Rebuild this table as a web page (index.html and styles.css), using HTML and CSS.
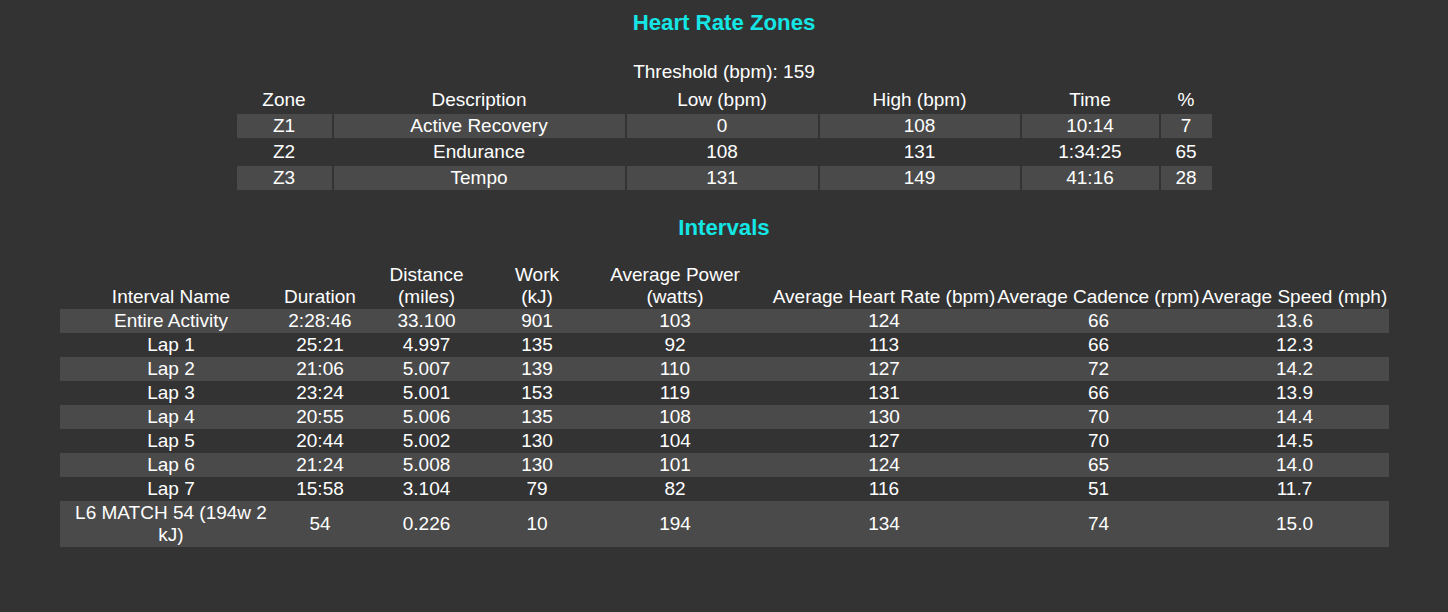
FILE: index.html
```html
<!DOCTYPE html>
<html lang="en">
<head>
<meta charset="utf-8">
<title>Heart Rate Zones and Intervals</title>
<link rel="stylesheet" href="styles.css">
</head>
<body>
<main class="page">
  <h3 class="title">Heart Rate Zones</h3>
  <div class="threshold">Threshold (bpm): 159</div>
  <table class="zones">
    <colgroup>
      <col class="z-zone"><col class="z-desc"><col class="z-low"><col class="z-high"><col class="z-time"><col class="z-pct">
    </colgroup>
    <thead>
      <tr><th>Zone</th><th>Description</th><th>Low (bpm)</th><th>High (bpm)</th><th>Time</th><th>%</th></tr>
    </thead>
    <tbody>
      <tr class="shaded"><td>Z1</td><td>Active Recovery</td><td>0</td><td>108</td><td>10:14</td><td>7</td></tr>
      <tr><td>Z2</td><td>Endurance</td><td>108</td><td>131</td><td>1:34:25</td><td>65</td></tr>
      <tr class="shaded"><td>Z3</td><td>Tempo</td><td>131</td><td>149</td><td>41:16</td><td>28</td></tr>
    </tbody>
  </table>

  <h3 class="title title-intervals">Intervals</h3>
  <table class="intervals">
    <colgroup>
      <col class="i-name"><col class="i-dur"><col class="i-dist"><col class="i-work"><col class="i-pow"><col class="i-hr"><col class="i-cad"><col class="i-spd">
    </colgroup>
    <thead>
      <tr>
        <th class="pad">Interval Name</th>
        <th>Duration</th>
        <th class="pad">Distance (miles)</th>
        <th class="pad">Work (kJ)</th>
        <th class="pad">Average Power (watts)</th>
        <th class="tight">Average Heart Rate (bpm)</th>
        <th class="tight">Average Cadence (rpm)</th>
        <th class="tight">Average Speed (mph)</th>
      </tr>
    </thead>
    <tbody>
      <tr class="shaded"><td class="pad">Entire Activity</td><td>2:28:46</td><td>33.100</td><td>901</td><td>103</td><td>124</td><td>66</td><td>13.6</td></tr>
      <tr><td class="pad">Lap 1</td><td>25:21</td><td>4.997</td><td>135</td><td>92</td><td>113</td><td>66</td><td>12.3</td></tr>
      <tr class="shaded"><td class="pad">Lap 2</td><td>21:06</td><td>5.007</td><td>139</td><td>110</td><td>127</td><td>72</td><td>14.2</td></tr>
      <tr><td class="pad">Lap 3</td><td>23:24</td><td>5.001</td><td>153</td><td>119</td><td>131</td><td>66</td><td>13.9</td></tr>
      <tr class="shaded"><td class="pad">Lap 4</td><td>20:55</td><td>5.006</td><td>135</td><td>108</td><td>130</td><td>70</td><td>14.4</td></tr>
      <tr><td class="pad">Lap 5</td><td>20:44</td><td>5.002</td><td>130</td><td>104</td><td>127</td><td>70</td><td>14.5</td></tr>
      <tr class="shaded"><td class="pad">Lap 6</td><td>21:24</td><td>5.008</td><td>130</td><td>101</td><td>124</td><td>65</td><td>14.0</td></tr>
      <tr><td class="pad">Lap 7</td><td>15:58</td><td>3.104</td><td>79</td><td>82</td><td>116</td><td>51</td><td>11.7</td></tr>
      <tr class="shaded"><td class="pad">L6 MATCH 54 (194w 2 kJ)</td><td>54</td><td>0.226</td><td>10</td><td>194</td><td>134</td><td>74</td><td>15.0</td></tr>
    </tbody>
  </table>
</main>
</body>
</html>
```

FILE: styles.css
```css
html, body {
  margin: 0;
  background: #333333;
}

body {
  color: #ffffff;
  font-family: "Liberation Sans", Arial, sans-serif;
  font-size: 19px;
  line-height: 22px;
  min-height: 612px;
}

.page {
  padding-top: 10px;
}

.title {
  margin: 0 0 22px;
  font-size: 22.23px;
  line-height: 26px;
  font-weight: bold;
  color: #14e6e6;
  text-align: center;
}

.title-intervals {
  margin: 23px 0 22px;
}

.threshold {
  padding: 3px 0;
  text-align: center;
}

table {
  margin: 0 auto;
  table-layout: fixed;
  font-size: 19px;
  line-height: 22px;
}

th {
  font-weight: normal;
}

th, td {
  padding: 1px;
  text-align: center;
}

.shaded td {
  background: #4a4a4a;
}

/* Heart rate zones */
.zones {
  width: 979px;
  border-spacing: 2px;
}

.z-zone { width: 95px; }
.z-desc { width: 291px; }
.z-low { width: 191px; }
.z-high { width: 200px; }
.z-time { width: 137px; }
.z-pct { width: 51px; }

/* Intervals */
.intervals {
  width: 1329px;
  border-spacing: 0;
}

.intervals th {
  vertical-align: bottom;
}

.intervals .pad {
  padding: 1px 4px;
}

.intervals .tight {
  padding: 1px 0;
  white-space: nowrap;
}

.i-name { width: 223px; }
.i-dur { width: 75px; }
.i-dist { width: 138px; }
.i-work { width: 83px; }
.i-pow { width: 193px; }
.i-hr { width: 225px; }
.i-cad { width: 204px; }
.i-spd { width: 188px; }
```
